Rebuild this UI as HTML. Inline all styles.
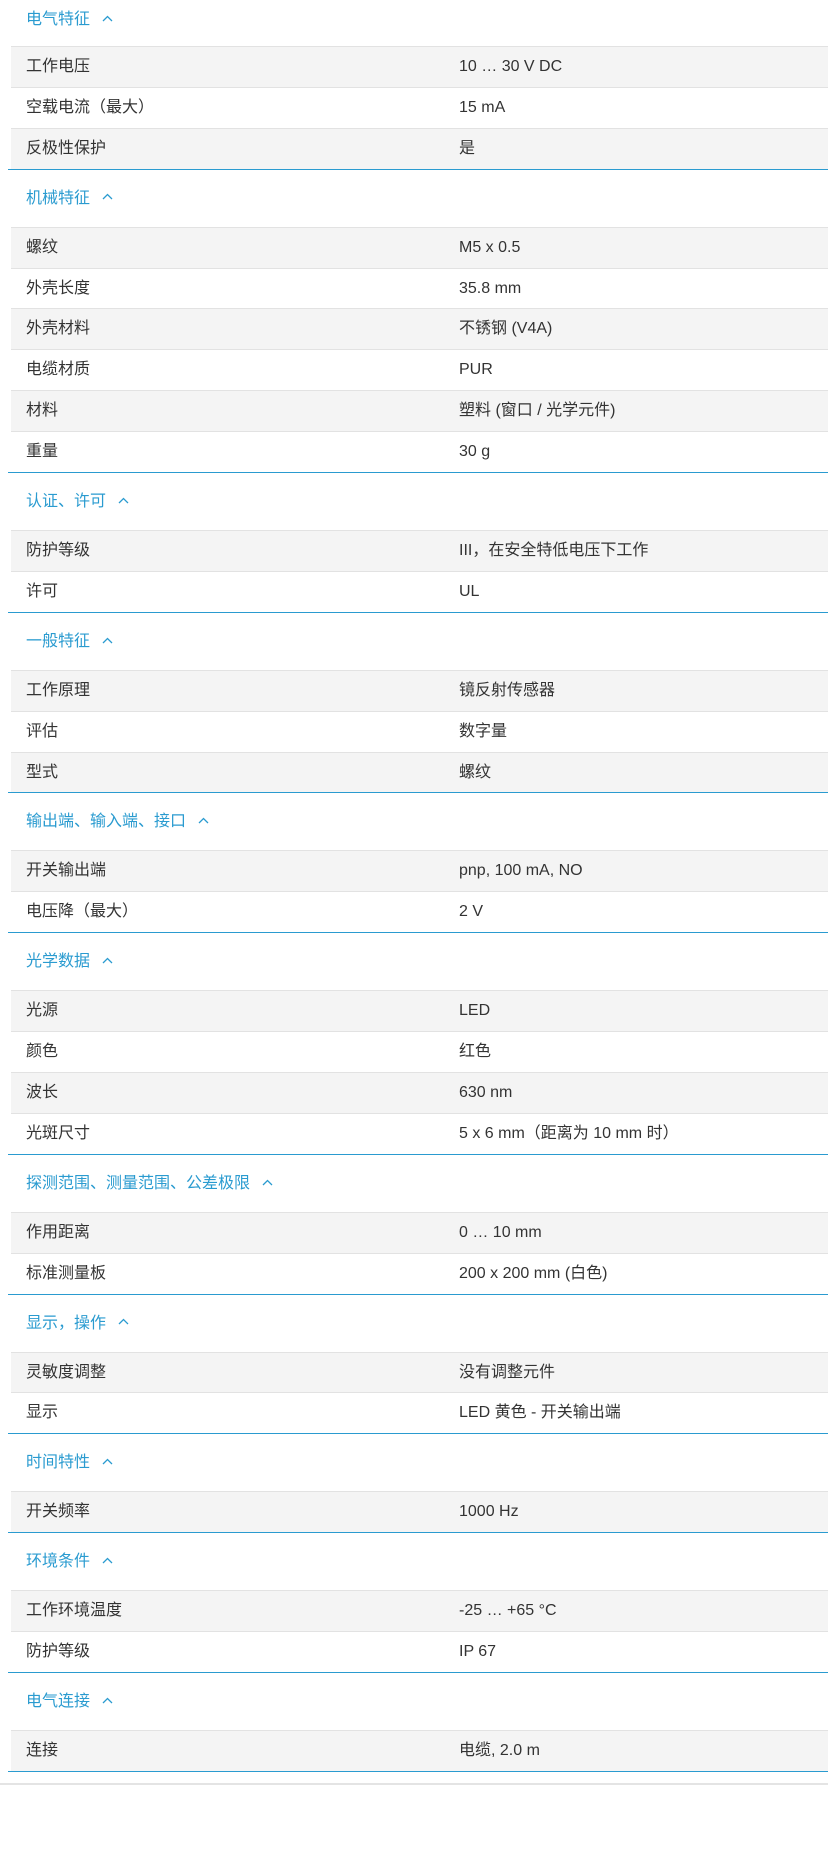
<!DOCTYPE html>
<html><head><meta charset="utf-8"><style>
*{margin:0;padding:0;box-sizing:border-box}
body{width:828px;height:1876px;background:#fff;font-family:"Liberation Sans","Noto Sans CJK SC",sans-serif;font-size:16px;color:#333;overflow:hidden;position:relative}
.sec{margin-left:8px;border-bottom:1.5px solid #2a9bd0}
.hd{height:57px;position:relative;color:#2a9bd0;padding-left:18px;line-height:57px}
.first .hd{height:46px;line-height:40px}
.hd svg{vertical-align:middle;margin-left:12px;margin-top:-3px}
.row{height:40.9px;margin-left:3px;border-top:1px solid #e2e2e2;line-height:40px;position:relative;padding-left:15px}
.row:nth-child(even){background:#f4f4f4}
.row span{position:absolute;left:448px;top:0}
.end{position:absolute;left:0;right:0;top:1783px;border-top:2px solid #e4e4e4}
</style></head><body>
<div class="sec first"><div class="hd">电气特征<svg width="11" height="7" viewBox="0 0 11 7"><path d="M1 6L5.5 1.5 10 6" fill="none" stroke="#2a9bd0" stroke-width="1.3"/></svg></div>
<div class="row">工作电压<span>10 … 30 V DC</span></div>
<div class="row">空载电流（最大）<span>15 mA</span></div>
<div class="row">反极性保护<span>是</span></div></div>
<div class="sec"><div class="hd">机械特征<svg width="11" height="7" viewBox="0 0 11 7"><path d="M1 6L5.5 1.5 10 6" fill="none" stroke="#2a9bd0" stroke-width="1.3"/></svg></div>
<div class="row">螺纹<span>M5 x 0.5</span></div>
<div class="row">外壳长度<span>35.8 mm</span></div>
<div class="row">外壳材料<span>不锈钢 (V4A)</span></div>
<div class="row">电缆材质<span>PUR</span></div>
<div class="row">材料<span>塑料 (窗口 / 光学元件)</span></div>
<div class="row">重量<span>30 g</span></div></div>
<div class="sec"><div class="hd">认证、许可<svg width="11" height="7" viewBox="0 0 11 7"><path d="M1 6L5.5 1.5 10 6" fill="none" stroke="#2a9bd0" stroke-width="1.3"/></svg></div>
<div class="row">防护等级<span>III，在安全特低电压下工作</span></div>
<div class="row">许可<span>UL</span></div></div>
<div class="sec"><div class="hd">一般特征<svg width="11" height="7" viewBox="0 0 11 7"><path d="M1 6L5.5 1.5 10 6" fill="none" stroke="#2a9bd0" stroke-width="1.3"/></svg></div>
<div class="row">工作原理<span>镜反射传感器</span></div>
<div class="row">评估<span>数字量</span></div>
<div class="row">型式<span>螺纹</span></div></div>
<div class="sec"><div class="hd">输出端、输入端、接口<svg width="11" height="7" viewBox="0 0 11 7"><path d="M1 6L5.5 1.5 10 6" fill="none" stroke="#2a9bd0" stroke-width="1.3"/></svg></div>
<div class="row">开关输出端<span>pnp, 100 mA, NO</span></div>
<div class="row">电压降（最大）<span>2 V</span></div></div>
<div class="sec"><div class="hd">光学数据<svg width="11" height="7" viewBox="0 0 11 7"><path d="M1 6L5.5 1.5 10 6" fill="none" stroke="#2a9bd0" stroke-width="1.3"/></svg></div>
<div class="row">光源<span>LED</span></div>
<div class="row">颜色<span>红色</span></div>
<div class="row">波长<span>630 nm</span></div>
<div class="row">光斑尺寸<span>5 x 6 mm（距离为 10 mm 时）</span></div></div>
<div class="sec"><div class="hd">探测范围、测量范围、公差极限<svg width="11" height="7" viewBox="0 0 11 7"><path d="M1 6L5.5 1.5 10 6" fill="none" stroke="#2a9bd0" stroke-width="1.3"/></svg></div>
<div class="row">作用距离<span>0 … 10 mm</span></div>
<div class="row">标准测量板<span>200 x 200 mm (白色)</span></div></div>
<div class="sec"><div class="hd">显示，操作<svg width="11" height="7" viewBox="0 0 11 7"><path d="M1 6L5.5 1.5 10 6" fill="none" stroke="#2a9bd0" stroke-width="1.3"/></svg></div>
<div class="row">灵敏度调整<span>没有调整元件</span></div>
<div class="row">显示<span>LED 黄色 - 开关输出端</span></div></div>
<div class="sec"><div class="hd">时间特性<svg width="11" height="7" viewBox="0 0 11 7"><path d="M1 6L5.5 1.5 10 6" fill="none" stroke="#2a9bd0" stroke-width="1.3"/></svg></div>
<div class="row">开关频率<span>1000 Hz</span></div></div>
<div class="sec"><div class="hd">环境条件<svg width="11" height="7" viewBox="0 0 11 7"><path d="M1 6L5.5 1.5 10 6" fill="none" stroke="#2a9bd0" stroke-width="1.3"/></svg></div>
<div class="row">工作环境温度<span>-25 … +65 °C</span></div>
<div class="row">防护等级<span>IP 67</span></div></div>
<div class="sec"><div class="hd">电气连接<svg width="11" height="7" viewBox="0 0 11 7"><path d="M1 6L5.5 1.5 10 6" fill="none" stroke="#2a9bd0" stroke-width="1.3"/></svg></div>
<div class="row">连接<span>电缆, 2.0 m</span></div></div>
<div class="end"></div>
</body></html>
